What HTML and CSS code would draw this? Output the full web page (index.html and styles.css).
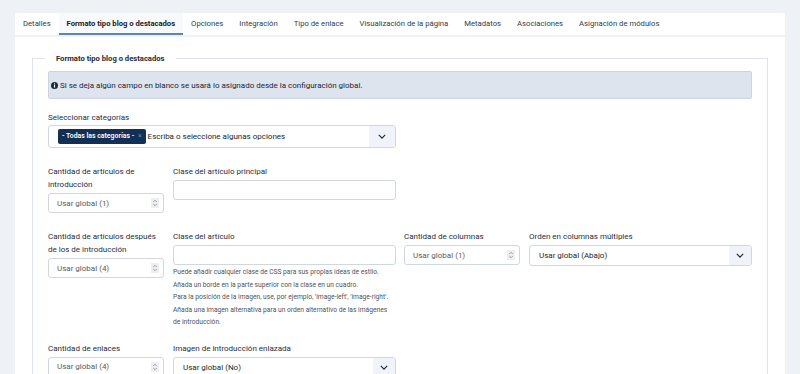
FILE: index.html
```html
<!DOCTYPE html>
<html lang="es">
<head>
<meta charset="utf-8">
<title>Formato tipo blog o destacados</title>
<link rel="stylesheet" href="styles.css">
</head>
<body>
<div class="page">
  <div class="card">
    <nav class="tabs">
      <span class="tab">Detalles</span>
      <span class="tab active">Formato tipo blog o destacados</span>
      <span class="tab">Opciones</span>
      <span class="tab">Integración</span>
      <span class="tab">Tipo de enlace</span>
      <span class="tab">Visualización de la página</span>
      <span class="tab">Metadatos</span>
      <span class="tab">Asociaciones</span>
      <span class="tab">Asignación de módulos</span>
    </nav>
    <div class="card-body">
      <fieldset class="group">
        <legend>Formato tipo blog o destacados</legend>
        <div class="alert">
          <svg class="info" viewBox="0 0 10 10" width="7" height="7"><circle cx="5" cy="5" r="5" fill="#1c2a3d"/><rect x="4.2" y="4.2" width="1.6" height="3.8" fill="#fff"/><circle cx="5" cy="2.7" r="0.9" fill="#fff"/></svg>
          <span>Si se deja algún campo en blanco se usará lo asignado desde la configuración global.</span>
        </div>

        <div class="field wide">
          <label>Seleccionar categorías</label>
          <div class="multiselect">
            <span class="tag">- Todas las categorías - <span class="x">×</span></span>
            <span class="placeholder">Escriba o seleccione algunas opciones</span>
            <span class="arrow"><svg viewBox="0 0 10 6" width="8" height="5"><path d="M1 1l4 4 4-4" fill="none" stroke="#22262a" stroke-width="1.4"/></svg></span>
          </div>
        </div>

        <div class="row r2">
          <div class="field c1">
            <label>Cantidad de artículos de introducción</label>
            <div class="number"><span>Usar global (1)</span><span class="spin"><svg viewBox="0 0 8 10" width="8" height="10"><rect width="8" height="10" fill="#eceef1"/><path d="M2.3 4l1.7-1.7L5.7 4M2.3 6l1.7 1.7L5.7 6" fill="none" stroke="#777" stroke-width="0.7"/></svg></span></div>
          </div>
          <div class="field c2">
            <label>Clase del artículo principal</label>
            <div class="text"></div>
          </div>
        </div>

        <div class="row r3">
          <div class="field c1">
            <label>Cantidad de artículos después de los de introducción</label>
            <div class="number"><span>Usar global (4)</span><span class="spin"><svg viewBox="0 0 8 10" width="8" height="10"><rect width="8" height="10" fill="#eceef1"/><path d="M2.3 4l1.7-1.7L5.7 4M2.3 6l1.7 1.7L5.7 6" fill="none" stroke="#777" stroke-width="0.7"/></svg></span></div>
          </div>
          <div class="field c2">
            <label>Clase del artículo</label>
            <div class="text"></div>
            <p class="help">Puede añadir cualquier clase de CSS para sus propias ideas de estilo.<br>Añada un borde en la parte superior con la clase en un cuadro.<br>Para la posición de la imagen, use, por ejemplo, 'image-left', 'image-right'.<br>Añada una imagen alternativa para un orden alternativo de las imágenes de introducción.</p>
          </div>
          <div class="field c1">
            <label>Cantidad de columnas</label>
            <div class="number"><span>Usar global (1)</span><span class="spin"><svg viewBox="0 0 8 10" width="8" height="10"><rect width="8" height="10" fill="#eceef1"/><path d="M2.3 4l1.7-1.7L5.7 4M2.3 6l1.7 1.7L5.7 6" fill="none" stroke="#777" stroke-width="0.7"/></svg></span></div>
          </div>
          <div class="field c2">
            <label>Orden en columnas múltiples</label>
            <div class="select"><span>Usar global (Abajo)</span><span class="arrow"><svg viewBox="0 0 10 6" width="8" height="5"><path d="M1 1l4 4 4-4" fill="none" stroke="#22262a" stroke-width="1.4"/></svg></span></div>
          </div>
        </div>

        <div class="row r4">
          <div class="field c1">
            <label>Cantidad de enlaces</label>
            <div class="number"><span>Usar global (4)</span><span class="spin"><svg viewBox="0 0 8 10" width="8" height="10"><rect width="8" height="10" fill="#eceef1"/><path d="M2.3 4l1.7-1.7L5.7 4M2.3 6l1.7 1.7L5.7 6" fill="none" stroke="#777" stroke-width="0.7"/></svg></span></div>
          </div>
          <div class="field c2">
            <label>Imagen de introducción enlazada</label>
            <div class="select"><span>Usar global (No)</span><span class="arrow"><svg viewBox="0 0 10 6" width="8" height="5"><path d="M1 1l4 4 4-4" fill="none" stroke="#22262a" stroke-width="1.4"/></svg></span></div>
          </div>
        </div>
      </fieldset>
    </div>
  </div>
</div>
</body>
</html>
```
FILE: styles.css
```css
html, body {
  margin: 0;
  padding: 0;
  height: 374px;
  overflow: hidden;
}
body {
  background: #eef2f7;
  font-family: Roboto, "Liberation Sans", sans-serif;
  font-size: 8px;
  color: #22262a;
}
.page {
  padding: 13px 15px 0;
}
.card {
  background: #fff;
  border-radius: 2px 2px 0 0;
  height: 400px;
}
.tabs {
  display: flex;
  height: 22px;
  border-bottom: 2px solid #eff2f7;
}
.tab {
  padding: 0 8px;
  line-height: 22px;
  font-size: 7.7px;
  color: #2f3b4c;
  white-space: nowrap;
}
.tab.active {
  font-weight: 700;
  font-size: 7.65px;
  color: #131c2a;
  background: #f8f9fb;
  box-shadow: inset 0 -2px 0 #5a84bd;
}
.card-body {
  padding: 15px 17px 0;
}
.group {
  margin: 0;
  border: 1px solid #dde3ec;
  padding: 6px 15px 0;
  min-width: 0;
}
.group legend {
  font-weight: 700;
  font-size: 7.65px;
  line-height: 13px;
  padding: 0 11px;
  margin-left: -3px;
  color: #1f2937;
}
.alert {
  display: flex;
  align-items: center;
  gap: 2px;
  height: 28px;
  box-sizing: border-box;
  padding: 0 2px;
  background: #dee4ee;
  border: 1px solid #cad4e3;
  border-radius: 2px;
  color: #1c2533;
  margin-bottom: 12px;
}
.info { flex: none; }
label {
  display: block;
  line-height: 13px;
  color: #1f2d42;
  margin-bottom: 2px;
}
.field.wide label { margin-bottom: 1px; }
.field.wide { margin-bottom: 17px; }
.multiselect {
  display: flex;
  align-items: center;
  height: 23px;
  box-sizing: border-box;
  width: 348px;
  border: 1px solid #cfd7e3;
  border-radius: 3px;
  padding-left: 9px;
}
.tag {
  background: #132f53;
  color: #fff;
  font-size: 6.9px;
  font-weight: 600;
  height: 15px;
  line-height: 15px;
  padding: 0 4px;
  border-radius: 2px;
  white-space: nowrap;
}
.tag .x { color: #8b98ab; font-weight: 400; margin-left: 2px; }
.placeholder { margin-left: 2px; color: #22262a; flex: 1; }
.arrow {
  display: flex;
  align-items: center;
  justify-content: center;
  width: 26px;
  align-self: stretch;
  background: #f0f4fa;
  border-radius: 0 3px 3px 0;
}
.row {
  display: flex;
  gap: 8px;
  align-items: flex-start;
}
.field.c1 { width: 116px; flex: none; }
.field.c2 { width: 223px; flex: none; }
.row .field.c1 + .field.c2 { margin-left: 1px; }
.r2 { margin-bottom: 17px; }
.r3 { margin-bottom: 13px; }
.number, .text, .select {
  height: 20px;
  box-sizing: border-box;
  border: 1px solid #cfd7e3;
  border-radius: 3px;
  display: flex;
  align-items: center;
}
.number {
  padding: 0 4px 0 8px;
  justify-content: space-between;
  color: #555b63;
}
.spin { display: flex; }
.select {
  height: 21px;
  padding-left: 9px;
  color: #22262a;
}
.select span:first-child { flex: 1; }
.select .arrow { width: 22px; }
.help {
  margin: 0;
  font-size: 6.7px;
  line-height: 12.5px;
  color: #4d545c;
  padding-top: 1px;
}
```
